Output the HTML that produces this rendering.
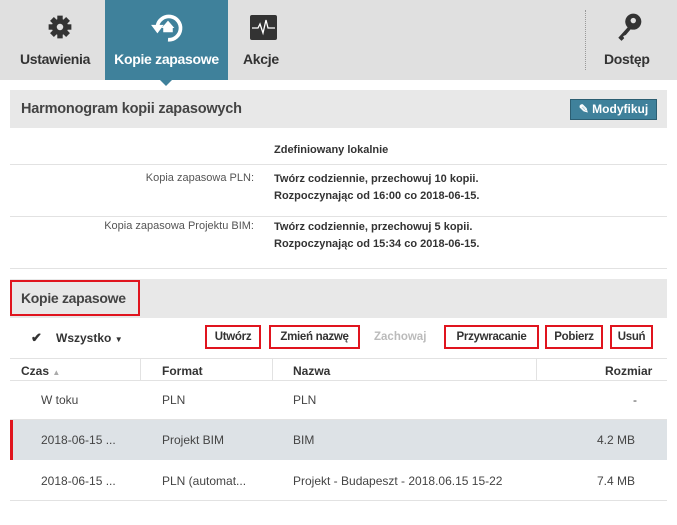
<html><head><style>
body{margin:0;width:677px;height:525px;background:#fff;font-family:"Liberation Sans",sans-serif;color:#333;position:relative;overflow:hidden}
.a{position:absolute}
.top{left:0;top:0;width:677px;height:80px;background:#e0e0e0}
.tab{top:51px;font-size:14px;font-weight:bold;color:#333;text-align:center;letter-spacing:-0.3px}
.hdr{left:10px;width:657px;background:#e8e8e8}
.lbl{font-size:11px;color:#555;text-align:right;width:244px;left:10px}
.val{font-size:11px;font-weight:bold;left:274px;line-height:17px;color:#333}
.hl{height:1px;background:#e2e2e2}
.btn{top:325px;height:24px;border:2px solid #e0141e;box-sizing:border-box;font-size:11.5px;font-weight:bold;line-height:20px;text-align:center;letter-spacing:-0.3px}
.th{top:364px;font-size:12px;font-weight:bold}
.td{font-size:12px;color:#444}
.vs{width:1px;background:#e2e2e2}
</style></head><body>
<div class="a top"></div>
<div class="a" style="left:105px;top:0;width:123px;height:80px;background:#3f819b"></div>
<div class="a" style="left:160px;top:80px;width:0;height:0;border-left:6px solid transparent;border-right:6px solid transparent;border-top:6px solid #3f819b"></div>
<div class="a" style="left:585px;top:10px;height:60px;border-left:1px dotted #999"></div>
<svg class="a" style="left:47px;top:14px" width="26" height="26" viewBox="0 0 24 24"><g fill="#333"><circle cx="12" cy="12" r="7.5"/><rect x="9.5" y="1.5" width="5" height="21"/><rect x="1.5" y="9.5" width="21" height="5"/><rect x="9.5" y="1.5" width="5" height="21" transform="rotate(45 12 12)"/><rect x="9.5" y="1.5" width="5" height="21" transform="rotate(-45 12 12)"/></g><circle cx="12" cy="12" r="3" fill="#e0e0e0"/></svg>
<svg class="a" style="left:150px;top:10px" width="36" height="34" viewBox="0 0 34 32"><path d="M7 15 A11 11 0 1 1 17 28" stroke="#fff" stroke-width="3.5" fill="none"/><path d="M1 14 L13 14 L7 22Z" fill="#fff"/><path d="M11 17 L17 10 L23 17 L21.5 17 L21.5 21 L12.5 21 L12.5 17Z" fill="#fff"/></svg>
<svg class="a" style="left:250px;top:15px" width="27" height="25" viewBox="0 0 27 25"><rect width="27" height="25" rx="2" fill="#333"/><path d="M2 13 H8 L10 9 L13 18 L16 5 L18 13 H25" stroke="#fff" stroke-width="1.3" fill="none"/></svg>
<svg class="a" style="left:614px;top:12px" width="30" height="30" viewBox="0 0 26 28"><circle cx="17" cy="9" r="7.5" fill="#333"/><circle cx="17" cy="8" r="2.5" fill="#e0e0e0"/><path d="M13 13 L3 24 L6 27 L8.5 24.5 L7.5 22.5 L10 21.5 L15.5 15Z" fill="#333"/></svg>
<div class="a tab" style="left:20px">Ustawienia</div>
<div class="a tab" style="left:105px;width:123px;color:#fff">Kopie zapasowe</div>
<div class="a tab" style="left:243px">Akcje</div>
<div class="a tab" style="left:604px">Dostęp</div>

<div class="a hdr" style="top:90px;height:38px"></div>
<div class="a" style="left:21px;top:101px;font-size:14.5px;font-weight:bold;color:#444;letter-spacing:-0.2px">Harmonogram kopii zapasowych</div>
<div class="a" style="left:570px;top:99px;width:87px;height:21px;background:#3f819b;border:1px solid #2c5e72;box-sizing:border-box;color:#fff;font-size:12px;font-weight:bold;line-height:19px;text-align:center">✎ Modyfikuj</div>

<div class="a val" style="top:142px">Zdefiniowany lokalnie</div>
<div class="a hl" style="left:10px;top:164px;width:657px"></div>
<div class="a lbl" style="top:172px">Kopia zapasowa PLN:</div>
<div class="a val" style="top:171px">Twórz codziennie, przechowuj 10 kopii.<br>Rozpoczynając od 16:00 co 2018-06-15.</div>
<div class="a hl" style="left:10px;top:216px;width:657px"></div>
<div class="a lbl" style="top:220px">Kopia zapasowa Projektu BIM:</div>
<div class="a val" style="top:219px">Twórz codziennie, przechowuj 5 kopii.<br>Rozpoczynając od 15:34 co 2018-06-15.</div>
<div class="a hl" style="left:10px;top:268px;width:657px"></div>

<div class="a hdr" style="top:279px;height:39px"></div>
<div class="a" style="left:10px;top:280px;width:130px;height:36px;border:2px solid #e0141e;box-sizing:border-box"></div>
<div class="a" style="left:21px;top:290px;font-size:14px;font-weight:bold;color:#444;letter-spacing:-0.3px">Kopie zapasowe</div>

<div class="a" style="left:31px;top:330px;font-size:13px;font-weight:bold">✔</div>
<div class="a" style="left:56px;top:331px;font-size:12px;font-weight:bold">Wszystko <span style="font-size:8px">▼</span></div>
<div class="a btn" style="left:205px;width:56px">Utwórz</div>
<div class="a btn" style="left:269px;width:91px">Zmień nazwę</div>
<div class="a" style="left:374px;top:331px;font-size:11.5px;font-weight:bold;color:#bbb">Zachowaj</div>
<div class="a btn" style="left:444px;width:95px">Przywracanie</div>
<div class="a btn" style="left:545px;width:58px">Pobierz</div>
<div class="a btn" style="left:610px;width:43px">Usuń</div>

<div class="a hl" style="left:10px;top:358px;width:657px"></div>
<div class="a th" style="left:21px">Czas <span style="font-size:8px;color:#aaa">▲</span></div>
<div class="a th" style="left:162px">Format</div>
<div class="a th" style="left:293px">Nazwa</div>
<div class="a th" style="left:605px">Rozmiar</div>
<div class="a vs" style="left:140px;top:358px;height:22px"></div>
<div class="a vs" style="left:272px;top:358px;height:22px"></div>
<div class="a vs" style="left:536px;top:358px;height:22px"></div>
<div class="a hl" style="left:10px;top:380px;width:657px"></div>

<div class="a td" style="left:41px;top:393px">W toku</div>
<div class="a td" style="left:162px;top:393px">PLN</div>
<div class="a td" style="left:293px;top:393px">PLN</div>
<div class="a td" style="left:633px;top:393px">-</div>
<div class="a hl" style="left:10px;top:419px;width:657px"></div>
<div class="a" style="left:10px;top:420px;width:657px;height:40px;background:#dde2e6"></div>
<div class="a" style="left:10px;top:420px;width:3px;height:40px;background:#e0141e"></div>
<div class="a td" style="left:41px;top:433px">2018-06-15 ...</div>
<div class="a td" style="left:162px;top:433px">Projekt BIM</div>
<div class="a td" style="left:293px;top:433px">BIM</div>
<div class="a td" style="left:597px;top:433px">4.2 MB</div>
<div class="a td" style="left:41px;top:474px">2018-06-15 ...</div>
<div class="a td" style="left:162px;top:474px">PLN (automat...</div>
<div class="a td" style="left:293px;top:474px">Projekt - Budapeszt - 2018.06.15 15-22</div>
<div class="a td" style="left:597px;top:474px">7.4 MB</div>
<div class="a hl" style="left:10px;top:500px;width:657px"></div>
</body></html>
